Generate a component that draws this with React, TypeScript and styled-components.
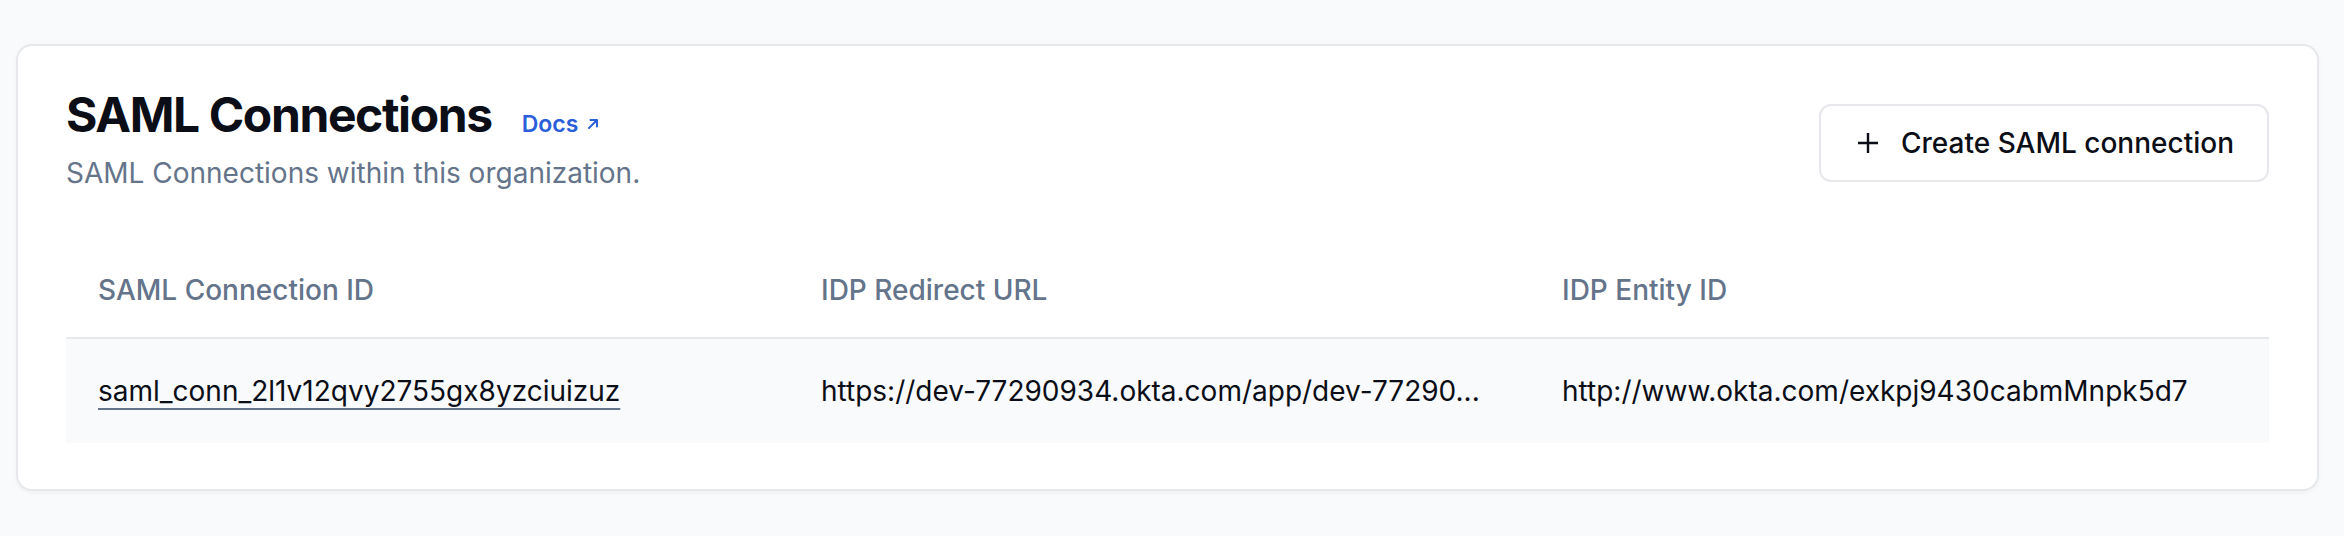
import styled, { createGlobalStyle } from "styled-components";

type Connection = {
  id: string;
  redirectUrl: string;
  entityId: string;
};

const connections: Connection[] = [
  {
    id: "saml_conn_2l1v12qvy2755gx8yzciuizuz",
    redirectUrl: "https://dev-77290934.okta.com/app/dev-77290...",
    entityId: "http://www.okta.com/exkpj9430cabmMnpk5d7",
  },
];

const GlobalStyle = createGlobalStyle`
  body {
    margin: 0;
    background: #f9fafb;
    font-family: Inter, "Noto Sans", sans-serif;
    -webkit-font-smoothing: antialiased;
  }
`;

const ArrowIcon = () => (
  <svg width="14" height="14" viewBox="0 0 14 14" fill="none">
    <path
      d="M3 11 L11 3 M4.5 3 H11 V9.5"
      stroke="currentColor"
      strokeWidth="2"
      strokeLinecap="round"
      strokeLinejoin="round"
    />
  </svg>
);

const PlusIcon = () => (
  <svg width="22" height="22" viewBox="0 0 22 22" fill="none">
    <path d="M11 1 V21 M1 11 H21" stroke="currentColor" strokeWidth="2.4" />
  </svg>
);

const App = () => {
  return (
    <Page>
      <GlobalStyle />
      <Card>
        <Header>
          <TitleBlock>
            <TitleRow>
              <Title>SAML Connections</Title>
              <DocsLink href="#">
                Docs
                <ArrowIcon />
              </DocsLink>
            </TitleRow>
            <Subtitle>SAML Connections within this organization.</Subtitle>
          </TitleBlock>
          <CreateButton>
            <PlusIcon />
            Create SAML connection
          </CreateButton>
        </Header>

        <Table>
          <HeaderCell>SAML Connection ID</HeaderCell>
          <HeaderCell>IDP Redirect URL</HeaderCell>
          <HeaderCell>IDP Entity ID</HeaderCell>
          {connections.map((c) => (
            <Row key={c.id}>
              <Cell>
                <IdLink href="#">{c.id}</IdLink>
              </Cell>
              <Cell>{c.redirectUrl}</Cell>
              <Cell>{c.entityId}</Cell>
            </Row>
          ))}
        </Table>
      </Card>
    </Page>
  );
};

export default App;

const Page = styled.div`
  padding: 44px 25px 44px 16px;
`;

// 外側のカード
const Card = styled.div`
  background: #ffffff;
  border: 2px solid #e6e8ec;
  border-radius: 16px;
  padding: 40px 48px 46px;
  box-shadow: 0 2px 4px rgba(15, 23, 42, 0.04);
`;

const Header = styled.div`
  display: flex;
  justify-content: space-between;
  align-items: flex-start;
`;

const TitleBlock = styled.div`
  display: flex;
  flex-direction: column;
`;

const TitleRow = styled.div`
  display: flex;
  align-items: baseline;
  gap: 30px;
`;

const Title = styled.h1`
  margin: 0;
  font-size: 48px;
  line-height: 58px;
  font-weight: 700;
  color: #0b0e17;
  letter-spacing: -1.4px;
`;

const DocsLink = styled.a`
  display: inline-flex;
  align-items: center;
  gap: 8px;
  font-size: 23px;
  font-weight: 600;
  color: #2b5fd9;
  text-decoration: none;
`;

const Subtitle = styled.p`
  margin: 9px 0 0;
  font-size: 28px;
  line-height: 40px;
  color: #64748b;
`;

const CreateButton = styled.button`
  margin-top: 18px;
  display: flex;
  align-items: center;
  gap: 22px;
  height: 78px;
  padding: 0 33px 0 36px;
  background: #ffffff;
  border: 2px solid #e6e8ec;
  border-radius: 12px;
  font-family: inherit;
  font-size: 28px;
  font-weight: 500;
  color: #0b0e17;
  cursor: pointer;
`;

// テーブル全体（3列のグリッド）
const Table = styled.div`
  margin-top: 50px;
  display: grid;
  grid-template-columns: 723px 741px 1fr;
`;

const HeaderCell = styled.div`
  padding: 27px 32px;
  font-size: 28px;
  line-height: 40px;
  font-weight: 500;
  color: #64748b;
  border-bottom: 2px solid #e6e8ec;
`;

const Row = styled.div`
  display: contents;
`;

const Cell = styled.div`
  padding: 32px;
  font-size: 28px;
  line-height: 40px;
  color: #0b0e17;
  background: #f8fafc;
  white-space: nowrap;
  overflow: hidden;
`;

const IdLink = styled.a`
  color: inherit;
  text-decoration: underline;
  text-decoration-color: #64748b;
  text-decoration-thickness: 2px;
  text-underline-offset: 7px;
`;
